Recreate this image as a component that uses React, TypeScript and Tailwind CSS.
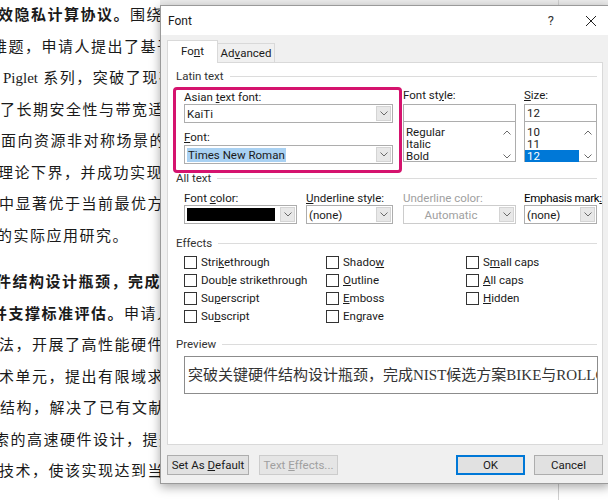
import type { ReactNode } from "react";

// Document text behind the dialog (only the left part shows)
const para1: { ml: string; parts: { t: string; b?: boolean; latin?: boolean }[] }[] = [
  { ml: "ml-[-2px]", parts: [{ t: "效隐私计算协议。", b: true }, { t: "围绕无人机通信中的" }] },
  { ml: "ml-[-8px]", parts: [{ t: "难题，申请人提出了基于格的方案" }] },
  { ml: "ml-[3px]", parts: [{ t: "Piglet", latin: true }, { t: " 系列，突破了现有方案" }] },
  { ml: "ml-[0px]", parts: [{ t: "了长期安全性与带宽适配问题" }] },
  { ml: "ml-[1px]", parts: [{ t: "面向资源非对称场景的协议" }] },
  { ml: "ml-[-2px]", parts: [{ t: "理论下界，并成功实现了部署" }] },
  { ml: "ml-[-1px]", parts: [{ t: "中显著优于当前最优方案的性能" }] },
  { ml: "ml-[-3px]", parts: [{ t: "的实际应用研究。" }] },
];

const para2: { ml: string; parts: { t: string; b?: boolean }[] }[] = [
  { ml: "ml-[-4px]", parts: [{ t: "件结构设计瓶颈，完成候选方案", b: true }] },
  { ml: "ml-[-8px]", parts: [{ t: "并支撑标准评估。", b: true }, { t: "申请人针对" }] },
  { ml: "ml-[-1px]", parts: [{ t: "法，开展了高性能硬件实现" }] },
  { ml: "ml-[-1px]", parts: [{ t: "术单元，提出有限域求逆算法" }] },
  { ml: "ml-[0px]", parts: [{ t: "结构，解决了已有文献中的问题" }] },
  { ml: "ml-[-6px]", parts: [{ t: "索的高速硬件设计，提升了吞吐" }] },
  { ml: "ml-[-1px]", parts: [{ t: "技术，使该实现达到当前最优水平，并在多个平台上完成验证。" }] },
];

function Chevron({ up = false }: { up?: boolean }) {
  return (
    <svg width="8" height="5" viewBox="0 0 8 5" className="block">
      <path
        d={up ? "M0.5 4.5 L4 1 L7.5 4.5" : "M0.5 0.5 L4 4 L7.5 0.5"}
        fill="none"
        stroke="#6a6a6a"
        strokeWidth="1"
      />
    </svg>
  );
}

function Combo({
  className = "",
  children,
  disabled = false,
}: {
  className?: string;
  children?: ReactNode;
  disabled?: boolean;
}) {
  return (
    <div
      className={`flex h-[19px] border bg-white ${
        disabled ? "border-[#cccccc]" : "border-[#adadad]"
      } ${className}`}
    >
      <div className="flex min-w-0 flex-1 items-center overflow-hidden px-[2px]">
        {children}
      </div>
      <div className="m-px flex w-[15px] items-center justify-center border border-[#d4d4d4] bg-[#e8e8e8]">
        <Chevron />
      </div>
    </div>
  );
}

function ListBox({
  items,
  selected,
}: {
  items: string[];
  selected?: string;
}) {
  return (
    <div className="flex h-[40px] border border-t-0 border-[#adadad] bg-white">
      <div className="flex flex-1 flex-col pt-[4px]">
        {items.map((i) => (
          <div
            key={i}
            className={`h-[12px] pl-[2px] leading-[12px] ${
              i === selected ? "bg-[#0078d7] text-white" : ""
            }`}
          >
            {i}
          </div>
        ))}
      </div>
      <div className="flex w-[17px] flex-col items-center gap-[19px] pt-[8px]">
        <Chevron up />
        <Chevron />
      </div>
    </div>
  );
}

function Heading({ children }: { children: ReactNode }) {
  return (
    <div className="flex h-[14px] items-center gap-[6px] leading-[14px] text-[#333333]">
      <span>{children}</span>
      <div className="h-px flex-1 bg-[#dcdcdc]" />
    </div>
  );
}

function Check({ children }: { children: ReactNode }) {
  return (
    <div className="flex h-[18px] items-center gap-[4px]">
      <div className="h-[13px] w-[13px] border border-[#333333] bg-white" />
      <span>{children}</span>
    </div>
  );
}

function Label({ children, className = "" }: { children: ReactNode; className?: string }) {
  return <div className={`h-[14px] whitespace-nowrap leading-[14px] ${className}`}>{children}</div>;
}

export default function App() {
  return (
    <div className="relative h-[500px] w-[608px] overflow-hidden bg-white">
      {/* Document */}
      <div className="flex flex-col text-[15px] leading-[31.5px] tracking-[1.5px] text-[#1a1a1a] font-['Liberation_Serif','Noto_Sans_CJK_SC',serif]">
        {para1.map((l, i) => (
          <div key={i} className={`whitespace-nowrap ${l.ml}`}>
            {l.parts.map((p, j) => (
              <span key={j} className={`${p.b ? "font-bold" : ""} ${p.latin ? "tracking-normal" : ""}`}>
                {p.t}
              </span>
            ))}
          </div>
        ))}
        <div className="mt-[15px] flex flex-col">
          {para2.map((l, i) => (
            <div key={i} className={`whitespace-nowrap ${l.ml}`}>
              {l.parts.map((p, j) => (
                <span key={j} className={p.b ? "font-bold" : ""}>
                  {p.t}
                </span>
              ))}
            </div>
          ))}
        </div>
      </div>

      {/* window strip behind the dialog */}
      <div className="absolute left-[160px] top-0 h-[6px] w-[448px] border-b border-[#c8c8c8] bg-[#ececec]" />
      <div className="absolute left-[558px] top-0 h-[500px] w-px bg-[#d0d0d0]" />

      {/* Font dialog */}
      <div className="absolute left-[160px] top-[5px] w-[450px] border border-[#9a9a9a] bg-[#f0f0f0] text-[11.5px] leading-[14px] text-[#1a1a1a] shadow-[0_3px_10px_rgba(0,0,0,0.35)] font-['Roboto',sans-serif]">
        {/* Title bar */}
        <div className="flex h-[29px] items-center bg-white pl-[7px] pr-[12px]">
          <span className="flex-1 text-[12px]">Font</span>
          <span className="mr-[31px] text-[13px] text-[#333333]">?</span>
          <svg width="12" height="12" viewBox="0 0 12 12">
            <path d="M1 1 L11 11 M11 1 L1 11" stroke="#222222" strokeWidth="1" />
          </svg>
        </div>

        <div className="px-[6px] pt-[5px]">
          {/* Tabs */}
          <div className="relative z-10 -mb-px flex h-[23px] items-end">
            <div className="flex h-[23px] w-[51px] items-center justify-center border border-b-0 border-[#d9d9d9] bg-white pb-[2px]">
              Fo<u>n</u>t
            </div>
            <div className="mb-px flex h-[19px] w-[57px] items-center justify-center border-r border-t border-[#d9d9d9] bg-[#f0f0f0]">
              Ad<u>v</u>anced
            </div>
          </div>

          {/* Panel */}
          <div className="flex h-[383px] flex-col border border-[#d9d9d9] bg-white pl-[8px] pr-[5px] pt-[6px]">
            <Heading>Latin text</Heading>

            <div className="ml-[-3px] mt-[4px] flex">
              <div className="flex w-[229px] flex-col rounded-[4px] border-[3px] border-[#d5136e] pb-[6px] pl-[8px] pr-[6px]">
                <Label>
                  Asian <u>t</u>ext font:
                </Label>
                <Combo>KaiTi</Combo>
                <Label className="mt-[7px]">
                  <u>F</u>ont:
                </Label>
                <Combo className="mt-px">
                  <span className="bg-[#a9d1f2] px-px">Times New Roman</span>
                </Combo>
              </div>

              <div className="ml-px flex w-[113px] flex-col">
                <div className="h-[17px] leading-[17px]">
                  Font st<u>y</u>le:
                </div>
                <div className="h-[18px] border border-[#adadad] bg-white" />
                <ListBox items={["Regular", "Italic", "Bold"]} />
              </div>

              <div className="ml-[8px] flex w-[73px] flex-col">
                <div className="h-[17px] leading-[17px]">
                  <u>S</u>ize:
                </div>
                <div className="flex h-[18px] items-center border border-[#adadad] bg-white pl-[2px]">12</div>
                <ListBox items={["10", "11", "12"]} selected="12" />
              </div>
            </div>

            <div className="mt-[-2px]">
              <Heading>All text</Heading>
            </div>

            <div className="ml-[8px] mt-[6px] flex">
              <div className="flex w-[113px] flex-col">
                <Label>
                  Font <u>c</u>olor:
                </Label>
                <Combo>
                  <div className="mr-[2px] h-[13px] flex-1 bg-black" />
                </Combo>
              </div>
              <div className="ml-[9px] flex w-[87px] flex-col">
                <Label>
                  <u>U</u>nderline style:
                </Label>
                <Combo>(none)</Combo>
              </div>
              <div className="ml-[10px] flex w-[113px] flex-col">
                <Label className="text-[#a0a0a0]">Underline color:</Label>
                <Combo disabled>
                  <span className="w-full text-center text-[#a0a0a0]">Automatic</span>
                </Combo>
              </div>
              <div className="ml-[8px] flex w-[73px] flex-col">
                <Label className="tracking-[-0.3px] text-black">
                  Emphasis mark<u>:</u>
                </Label>
                <Combo>(none)</Combo>
              </div>
            </div>

            <div className="mt-[12px]">
              <Heading>Effects</Heading>
            </div>

            <div className="ml-[8px] mt-[3px] flex">
              <div className="flex w-[142px] flex-col">
                <Check>
                  Stri<u>k</u>ethrough
                </Check>
                <Check>
                  Doub<u>l</u>e strikethrough
                </Check>
                <Check>
                  Su<u>p</u>erscript
                </Check>
                <Check>
                  Su<u>b</u>script
                </Check>
              </div>
              <div className="flex w-[140px] flex-col">
                <Check>
                  Shado<u>w</u>
                </Check>
                <Check>
                  <u>O</u>utline
                </Check>
                <Check>
                  <u>E</u>mboss
                </Check>
                <Check>
                  En<u>g</u>rave
                </Check>
              </div>
              <div className="flex flex-col">
                <Check>
                  S<u>m</u>all caps
                </Check>
                <Check>
                  <u>A</u>ll caps
                </Check>
                <Check>
                  <u>H</u>idden
                </Check>
              </div>
            </div>

            <div className="mt-[12px]">
              <Heading>Preview</Heading>
            </div>

            <div className="ml-[8px] mr-[-1px] mt-[5px] flex h-[38px] items-center overflow-hidden border border-[#8c8c8c] bg-white pl-[3px]">
              <span className="whitespace-nowrap text-[15px] leading-[20px] text-[#333333] font-['Liberation_Serif','Noto_Sans_CJK_SC',serif]">
                突破关键硬件结构设计瓶颈，完成NIST候选方案BIKE与ROLLO的硬件实现
              </span>
            </div>
          </div>

          {/* Buttons */}
          <div className="flex h-[38px] items-start pt-[10px]">
            <button className="h-[20px] w-[82px] border border-[#adadad] bg-[#e1e1e1]">
              Set As <u>D</u>efault
            </button>
            <button className="ml-[10px] h-[20px] w-[79px] border border-[#cccccc] bg-[#e5e5e5] text-[#a0a0a0]">
              Text <u>E</u>ffects...
            </button>
            <div className="flex-1" />
            <button className="h-[20px] w-[69px] border-2 border-[#0078d7] bg-[#e1e1e1]">OK</button>
            <button className="ml-[9px] h-[20px] w-[69px] border border-[#adadad] bg-[#e1e1e1]">
              Cancel
            </button>
          </div>
        </div>
      </div>
    </div>
  );
}
